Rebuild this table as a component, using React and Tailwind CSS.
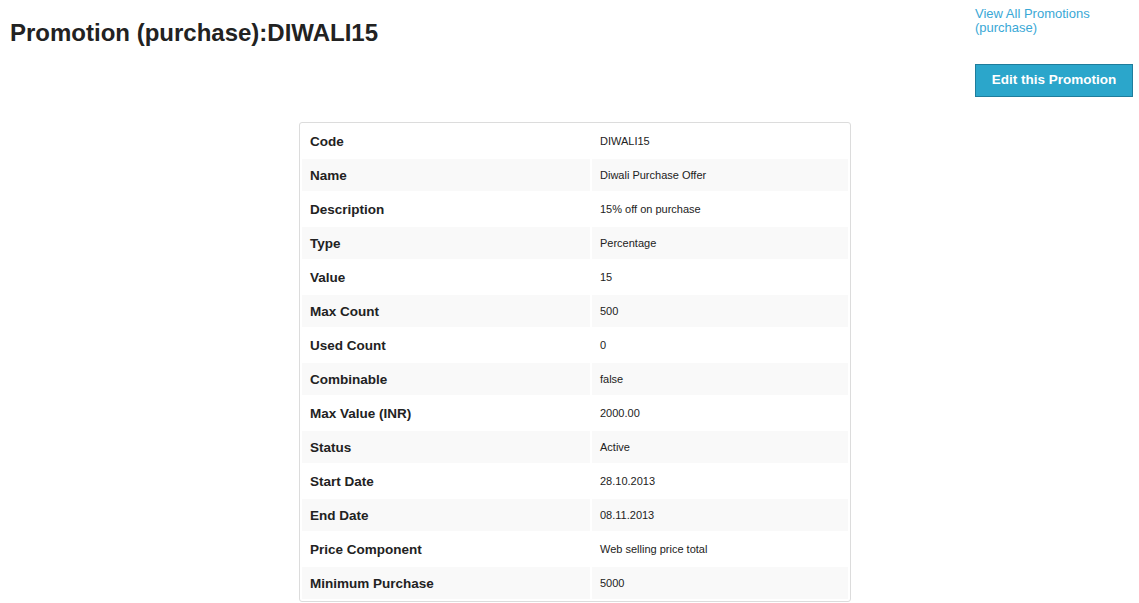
import React from "react";

const rows = [
  ["Code", "DIWALI15"],
  ["Name", "Diwali Purchase Offer"],
  ["Description", "15% off on purchase"],
  ["Type", "Percentage"],
  ["Value", "15"],
  ["Max Count", "500"],
  ["Used Count", "0"],
  ["Combinable", "false"],
  ["Max Value (INR)", "2000.00"],
  ["Status", "Active"],
  ["Start Date", "28.10.2013"],
  ["End Date", "08.11.2013"],
  ["Price Component", "Web selling price total"],
  ["Minimum Purchase", "5000"],
];

const App = () => {
  return (
    <div className="min-h-[603px] bg-white font-['Liberation_Sans',Arial,sans-serif] text-[#222]">
      <div className="flex justify-between">
        <h1 className="ml-[10px] mt-[18px] text-[24px] font-bold leading-[30px] text-[#222]">
          Promotion (purchase):DIWALI15
        </h1>

        <div className="mr-[6px] w-[158px] pt-[7px]">
          <a
            href="#"
            className="block w-[140px] text-[13px] leading-[14px] text-[#3aa8d6]"
          >
            View All Promotions (purchase)
          </a>

          <button className="mt-[29px] h-[33px] w-[158px] border border-[#1f7d9c] bg-[#2ba6cb] text-[13.5px] font-bold text-white">
            Edit this Promotion
          </button>
        </div>
      </div>

      <div className="ml-[299px] mt-[25px] w-[552px] rounded-[3px] border border-[#dcdcdc]">
        <table className="w-full border-separate border-spacing-[2px]">
          <tbody>
            {rows.map(([label, value], i) => (
              <tr key={label}>
                <td
                  className={`h-[32px] w-[288px] pl-[8px] pt-[2px] text-[13.5px] font-bold ${
                    i % 2 === 1 ? "bg-[#f9f9f9]" : "bg-white"
                  }`}
                >
                  {label}
                </td>
                <td
                  className={`h-[32px] pl-[8px] text-[11px] ${
                    i % 2 === 1 ? "bg-[#f9f9f9]" : "bg-white"
                  }`}
                >
                  {value}
                </td>
              </tr>
            ))}
          </tbody>
        </table>
      </div>
    </div>
  );
};

export default App;
